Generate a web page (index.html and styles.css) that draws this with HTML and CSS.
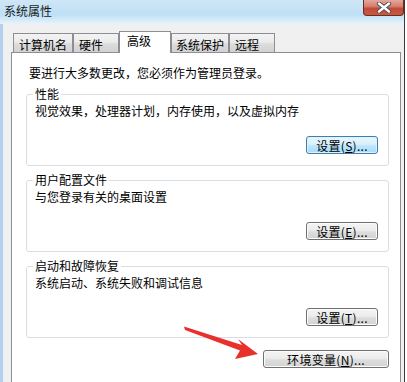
FILE: index.html
```html
<!DOCTYPE html>
<html lang="zh-CN">
<head>
<meta charset="utf-8">
<title>系统属性</title>
<link rel="stylesheet" href="styles.css">
</head>
<body>
<div class="window">
  <div class="titlebar">
    <span class="title">系统属性</span>
    <div class="close">
      <svg width="16" height="11" viewBox="0 0 16 11">
        <path d="M3 1.5 L13 9.5 M13 1.5 L3 9.5" stroke="#4a4a4a" stroke-width="4.2" stroke-linecap="round"/>
        <path d="M3 1.5 L13 9.5 M13 1.5 L3 9.5" stroke="#ffffff" stroke-width="2.4" stroke-linecap="round"/>
      </svg>
    </div>
  </div>
  <div class="frame">
    <div class="tabs">
      <div class="tab t1">计算机名</div>
      <div class="tab t2">硬件</div>
      <div class="tab sel">高级</div>
      <div class="tab t4">系统保护</div>
      <div class="tab t5">远程</div>
    </div>
    <div class="panel">
      <p class="note">要进行大多数更改，您必须作为管理员登录。</p>
      <fieldset class="group">
        <legend>性能</legend>
        <p class="desc">视觉效果，处理器计划，内存使用，以及虚拟内存</p>
        <div class="row"><button class="btn default">设置(<u>S</u>)...</button></div>
      </fieldset>
      <fieldset class="group">
        <legend>用户配置文件</legend>
        <p class="desc">与您登录有关的桌面设置</p>
        <div class="row"><button class="btn">设置(<u>E</u>)...</button></div>
      </fieldset>
      <fieldset class="group g3">
        <legend>启动和故障恢复</legend>
        <p class="desc">系统启动、系统失败和调试信息</p>
        <div class="row"><button class="btn">设置(<u>T</u>)...</button></div>
      </fieldset>
      <div class="row envrow"><button class="btn env">环境变量(<u>N</u>)...</button></div>
    </div>
  </div>
  <svg class="arrow" width="407" height="382" viewBox="0 0 407 382">
    <polygon points="184,326.5 242,345 238,339 258,354 235,359 240,350.5 185,330" fill="#e8302c"/>
  </svg>
</div>
</body>
</html>
```

FILE: styles.css
```css
* { box-sizing: border-box; }
html, body {
  margin: 0;
  padding: 0;
  background: #ffffff;
  overflow: hidden;
}
body {
  width: 407px;
  height: 382px;
  font-family: "Noto Sans CJK SC", "Noto Sans", sans-serif;
  font-size: 12px;
  color: #000;
}
.window {
  position: relative;
  width: 405px;
  height: 382px;
  border-right: 1px solid #3a3a3a;
  background: #f0f0f0;
}
.titlebar {
  height: 24px;
  display: flex;
  align-items: flex-start;
  background: linear-gradient(to bottom, #cfe7f7 0%, #bfdff5 60%, #d6ecf9 85%, #e8f3fb 100%);
}
.title {
  margin: 3px 0 0 4px;
  line-height: 16px;
  font-size: 12px;
  color: #1a1a1a;
}
.close {
  margin-left: auto;
  margin-right: 0;
  width: 41px;
  height: 16px;
  display: flex;
  align-items: center;
  justify-content: center;
  border: 1px solid #6b2c23;
  border-top: none;
  border-radius: 0 0 4px 4px;
  background: linear-gradient(to bottom, #e4a89c 0%, #d27a6b 45%, #c24a36 55%, #c85a42 100%);
}
.frame {
  height: 358px;
  border-left: 3px solid #b3d0ee;
  padding-top: 7px;
  background: #f0f0f0;
}
.tabs {
  display: flex;
  align-items: flex-end;
  height: 21px;
  margin-left: 10px;
  position: relative;
  z-index: 2;
}
.tab {
  height: 19px;
  line-height: 19px;
  padding: 1px 0 0 5px;
  border: 1px solid #8c8e94;
  border-bottom: none;
  background: linear-gradient(to bottom, #f3f3f3 0%, #ebebeb 45%, #dcdcdc 55%, #d2d2d2 100%);
  white-space: nowrap;
}
.t1 { width: 60px; }
.t2 { width: 46px; }
.t4 { width: 58px; padding-left: 4px; }
.t5 { width: 46px; }
.sel {
  width: 52px;
  height: 22px;
  margin-bottom: -1px;
  padding: 0 0 0 7px;
  line-height: 18px;
  background: #ffffff;
}
.panel {
  position: relative;
  z-index: 1;
  margin-left: 8px;
  width: 390px;
  height: 340px;
  border: 1px solid #8c8e94;
  background: #ffffff;
  padding: 13px 11px 0 14px;
}
.note {
  margin: 0 0 0 3px;
  line-height: 14px;
}
.group {
  margin: 7px 0 0 0;
  padding: 0 10px 11px 8px;
  border: 1px solid #d5dfe5;
  border-radius: 3px;
  min-width: 0;
}
.group legend {
  margin-left: -2px;
  padding: 0 2px;
  line-height: 14px;
}
.desc {
  margin: 3px 0 0 0;
  line-height: 14px;
}
.row {
  display: flex;
  justify-content: flex-end;
  margin-top: 18px;
}
.btn {
  width: 72px;
  height: 18px;
  padding: 0;
  font-family: "Noto Sans CJK SC", "Noto Sans", sans-serif;
  font-size: 12px;
  line-height: 15px;
  color: #000;
  letter-spacing: 0.3px;
  border: 1px solid #707070;
  border-radius: 3px;
  background: linear-gradient(to bottom, #f4f4f4 0%, #ececec 45%, #dedede 55%, #d2d2d2 100%);
  box-shadow: inset 0 0 0 1px #fcfcfc;
}
.btn u { text-decoration: underline; }
.btn.default {
  border-color: #3c7fb1;
  background: linear-gradient(to bottom, #eaf6fd 0%, #d9f0fc 45%, #bee6fd 55%, #a7d9f5 100%);
  box-shadow: inset 0 0 0 1px #dff2fc;
}
.envrow { margin-top: 12px; }
.btn.env { width: 126px; }
.arrow {
  position: absolute;
  left: 0;
  top: 0;
  z-index: 5;
  pointer-events: none;
}
```
